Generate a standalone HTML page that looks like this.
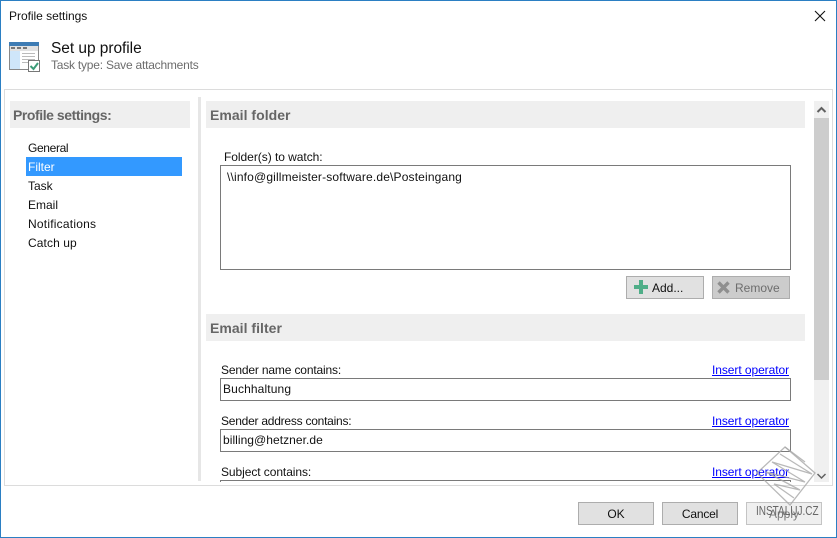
<!DOCTYPE html>
<html><head><meta charset="utf-8">
<style>
html,body{margin:0;padding:0;background:#fff}
#w{position:relative;width:837px;height:538px;overflow:hidden;background:#fff;font-family:"Liberation Sans",sans-serif;font-size:12px;color:#111}
#w div{position:absolute;box-sizing:border-box;white-space:nowrap}
.t{line-height:14px;letter-spacing:0}
.h{background:#efefef}
.hb{font-weight:bold;font-size:14px;color:#666;line-height:16px;letter-spacing:.03px}
.box{border:1px solid #7a7a7a;background:#fff}
.btn{background:#e1e1e1;border:1px solid #adadad;text-align:center;line-height:23px;letter-spacing:0}
.lnk{color:#00f;text-decoration:underline;line-height:14px;letter-spacing:-.07px}
</style></head><body>
<div id="w">
<div style="left:0;top:0;width:837px;height:538px;border:1px solid #2b7fc3"></div>
<div class="t" style="left:9px;top:9px;letter-spacing:-.03px">Profile settings</div>
<svg style="position:absolute;left:813px;top:9px" width="14" height="14"><path d="M2 2L12 12M12 2L2 12" stroke="#111" stroke-width="1.1" fill="none"/></svg>

<svg style="position:absolute;left:9px;top:42px" width="32" height="32">
<rect x=".5" y=".5" width="29" height="27" fill="#fff" stroke="#888"/>
<rect x="0" y="0" width="30" height="4" fill="#3e7cb4"/>
<rect x="1" y="4" width="28" height="5" fill="#e2e2e2"/>
<rect x="2" y="5" width="4" height="2" fill="#777"/><rect x="8" y="5" width="4" height="2" fill="#777"/><rect x="14" y="5" width="4" height="2" fill="#777"/>
<rect x="1" y="9" width="10" height="18" fill="#cfe6fa"/>
<path d="M13 11.500h13M13 14.500h13M13 17.500h13M13 20.500h6" stroke="#bbb" fill="none"/>
<rect x="19.500" y="18.500" width="11" height="11" fill="#fff" stroke="#777"/>
<path d="M21.500 24l3 3 4.500-6" stroke="#3c9c78" stroke-width="2" fill="none"/>
</svg>
<div style="left:51px;top:40px;font-size:15.500px;line-height:18px;letter-spacing:-.05px">Set up profile</div>
<div class="t" style="left:51px;top:58px;color:#6d6d6d;letter-spacing:-.22px">Task type: Save attachments</div>

<div style="left:4px;top:89px;width:829px;height:397px;border:1px solid #dcdcdc"></div>
<div class="h" style="left:10px;top:101px;width:180px;height:27px"></div>
<div class="hb" style="left:13px;top:107px;letter-spacing:-.44px">Profile settings:</div>
<div style="left:26px;top:157px;width:156px;height:19px;background:#3399ff"></div>
<div class="t" style="left:28px;top:141px;letter-spacing:-.35px">General</div>
<div class="t" style="left:28px;top:160px;color:#fff">Filter</div>
<div class="t" style="left:28px;top:179px">Task</div>
<div class="t" style="left:28px;top:198px">Email</div>
<div class="t" style="left:28px;top:217px;letter-spacing:.22px">Notifications</div>
<div class="t" style="left:28px;top:236px;letter-spacing:.1px">Catch up</div>
<div style="left:198px;top:97px;width:3px;height:384px;background:#e6e6e6"></div>

<div class="h" style="left:206px;top:101px;width:599px;height:27px"></div>
<div class="hb" style="left:210px;top:107px">Email folder</div>
<div class="t" style="left:224px;top:150px;letter-spacing:-.04px">Folder(s) to watch:</div>
<div class="box" style="left:220px;top:165px;width:571px;height:105px"></div>
<div class="t" style="left:227px;top:170px;letter-spacing:.16px">\\info@gillmeister-software.de\Posteingang</div>

<div class="btn" style="left:626px;top:276px;width:78px;height:23px;padding-left:25px;text-align:left">Add...</div>
<svg style="position:absolute;left:634px;top:280px" width="14" height="14"><path d="M5 0h4v5h5v4H9v5H5V9H0V5h5z" fill="#4fae88"/></svg>
<div class="btn" style="left:712px;top:276px;width:78px;height:23px;background:#cccccc;color:#6d6d6d;padding-left:22px;text-align:left">Remove</div>
<svg style="position:absolute;left:717px;top:281px" width="14" height="14"><path d="M1.500 1.500L11.500 11.500M11.500 1.500L1.500 11.500" stroke="#8f8f8f" stroke-width="3.400" fill="none"/></svg>

<div class="h" style="left:206px;top:314px;width:599px;height:27px"></div>
<div class="hb" style="left:210px;top:320px">Email filter</div>

<div class="t" style="left:221px;top:363px;letter-spacing:-.16px">Sender name contains:</div>
<div class="lnk" style="left:712px;top:363px">Insert operator</div>
<div class="box" style="left:220px;top:378px;width:571px;height:23px"></div>
<div class="t" style="left:223px;top:382px;letter-spacing:.13px">Buchhaltung</div>

<div class="t" style="left:221px;top:414px;letter-spacing:-.24px">Sender address contains:</div>
<div class="lnk" style="left:712px;top:414px">Insert operator</div>
<div class="box" style="left:220px;top:429px;width:571px;height:23px"></div>
<div class="t" style="left:223px;top:433px;letter-spacing:.05px">billing@hetzner.de</div>

<div class="t" style="left:221px;top:465px;letter-spacing:-.07px">Subject contains:</div>
<div class="lnk" style="left:712px;top:465px">Insert operator</div>
<div style="left:220px;top:480px;width:571px;height:2px;border:1px solid #7a7a7a;border-bottom:0"></div>

<div style="left:814px;top:101px;width:15px;height:381px;background:#f0f0f0"></div>
<div style="left:814px;top:118px;width:15px;height:262px;background:#cdcdcd"></div>
<svg style="position:absolute;left:814px;top:104px" width="15" height="12"><path d="M3.500 8L7.500 4L11.500 8" stroke="#606060" stroke-width="2" fill="none"/></svg>
<svg style="position:absolute;left:814px;top:471px" width="15" height="12"><path d="M3.500 3L7.500 7L11.500 3" stroke="#606060" stroke-width="1.500" fill="none"/></svg>

<div class="btn" style="left:578px;top:502px;width:76px;height:23px">OK</div>
<div class="btn" style="left:662px;top:502px;width:76px;height:23px;letter-spacing:-.2px">Cancel</div>
<div class="btn" style="left:746px;top:502px;width:76px;height:23px;background:#efefef;border-color:#c4c4c4;color:#7a7a7a">Apply</div>

<svg style="position:absolute;left:750px;top:440px" width="75" height="72" fill="none" stroke="#a8a8a8" stroke-opacity=".8" stroke-width="1.300">
<path d="M35 7L7 33L40 65L65 33Z"/>
<path d="M30 14L62 34L22 22L55 42L16 32L50 50L24 44L44 58"/>
<path d="M35 7L55 22"/>
</svg>
<div style="left:756px;top:504px;font-size:12.500px;line-height:14px;color:#666;transform:scaleX(.8);transform-origin:0 0;letter-spacing:0">INSTALUJ.CZ</div>
</div>
</body></html>
